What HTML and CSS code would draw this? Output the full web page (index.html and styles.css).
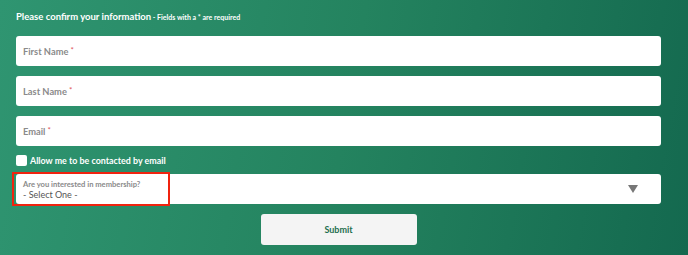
FILE: index.html
```html
<!DOCTYPE html>
<html>
<head>
<meta charset="utf-8">
<link rel="stylesheet" href="styles.css">
</head>
<body>
<form class="form">
  <div class="title"><span class="title-main">Please confirm your information</span><span class="title-sub"> - Fields with a * are required</span></div>
  <div class="field"><span class="ph">First Name</span><span class="req">*</span></div>
  <div class="field"><span class="ph">Last Name</span><span class="req">*</span></div>
  <div class="field"><span class="ph">Email</span><span class="req">*</span></div>
  <label class="check"><span class="box"></span><span class="check-text">Allow me to be contacted by email</span></label>
  <div class="select">
    <div class="select-text">
      <div class="select-label">Are you interested in membership?</div>
      <div class="select-value">- Select One -</div>
    </div>
    <svg class="arrow" width="10" height="8" viewBox="0 0 10 8"><path d="M0 0H10L5 8Z" fill="#777"/></svg>
    <div class="highlight"></div>
  </div>
  <div class="actions"><button type="button" class="submit">Submit</button></div>
</form>
</body>
</html>
```
FILE: styles.css
```css
html, body {
  margin: 0;
  padding: 0;
  height: 255px;
  overflow: hidden;
}
body {
  background: linear-gradient(100deg, #2f9571 0%, #24835f 50%, #14694f 100%);
  font-family: Lato, "Liberation Sans", sans-serif;
}
.form {
  width: 645px;
  padding: 7px 0 0 16px;
  display: flex;
  flex-direction: column;
}
.title {
  color: #fff;
  height: 14px;
  line-height: 14px;
  margin-bottom: 15px;
}
.title-main {
  font-size: 9.5px;
  font-weight: 700;
}
.title-sub {
  font-size: 7px;
  font-weight: 700;
}
.field {
  height: 30px;
  background: #fff;
  border-radius: 3px;
  box-sizing: border-box;
  padding: 0 7px;
  display: flex;
  align-items: center;
  margin-bottom: 10px;
  font-size: 9.3px;
}
.ph {
  color: #8a8a8a;
  font-weight: 700;
}
.req {
  color: #e0555a;
  font-size: 8px;
  margin-left: 2px;
  margin-top: -3px;
}
.check {
  display: flex;
  align-items: center;
  height: 12px;
  margin-top: -2px;
  margin-bottom: 8px;
}
.box {
  width: 11px;
  height: 11px;
  background: #fff;
  border-radius: 2px;
  margin-right: 3px;
}
.check-text {
  color: #fff;
  font-weight: 700;
  font-size: 8.9px;
}
.select {
  position: relative;
  height: 30px;
  background: #fff;
  border-radius: 3px;
  display: flex;
  align-items: center;
  justify-content: space-between;
  padding: 0 23px 0 7px;
  margin-bottom: 10px;
}
.select-text {
  display: flex;
  flex-direction: column;
  padding-top: 1px;
}
.select-label {
  font-size: 7.6px;
  font-weight: 700;
  color: #8a8a8a;
  line-height: 10px;
}
.select-value {
  font-size: 9px;
  color: #555;
  line-height: 12px;
}
.highlight {
  position: absolute;
  left: -4px;
  top: -2px;
  width: 154px;
  height: 30px;
  border: 2px solid #f0230f;
}
.actions {
  display: flex;
  justify-content: center;
}
.submit {
  width: 156px;
  height: 31px;
  background: #f4f4f4;
  border: none;
  border-radius: 3px;
  font-family: Lato, "Liberation Sans", sans-serif;
  font-weight: 700;
  font-size: 9px;
  color: #1e6e4f;
}
```
